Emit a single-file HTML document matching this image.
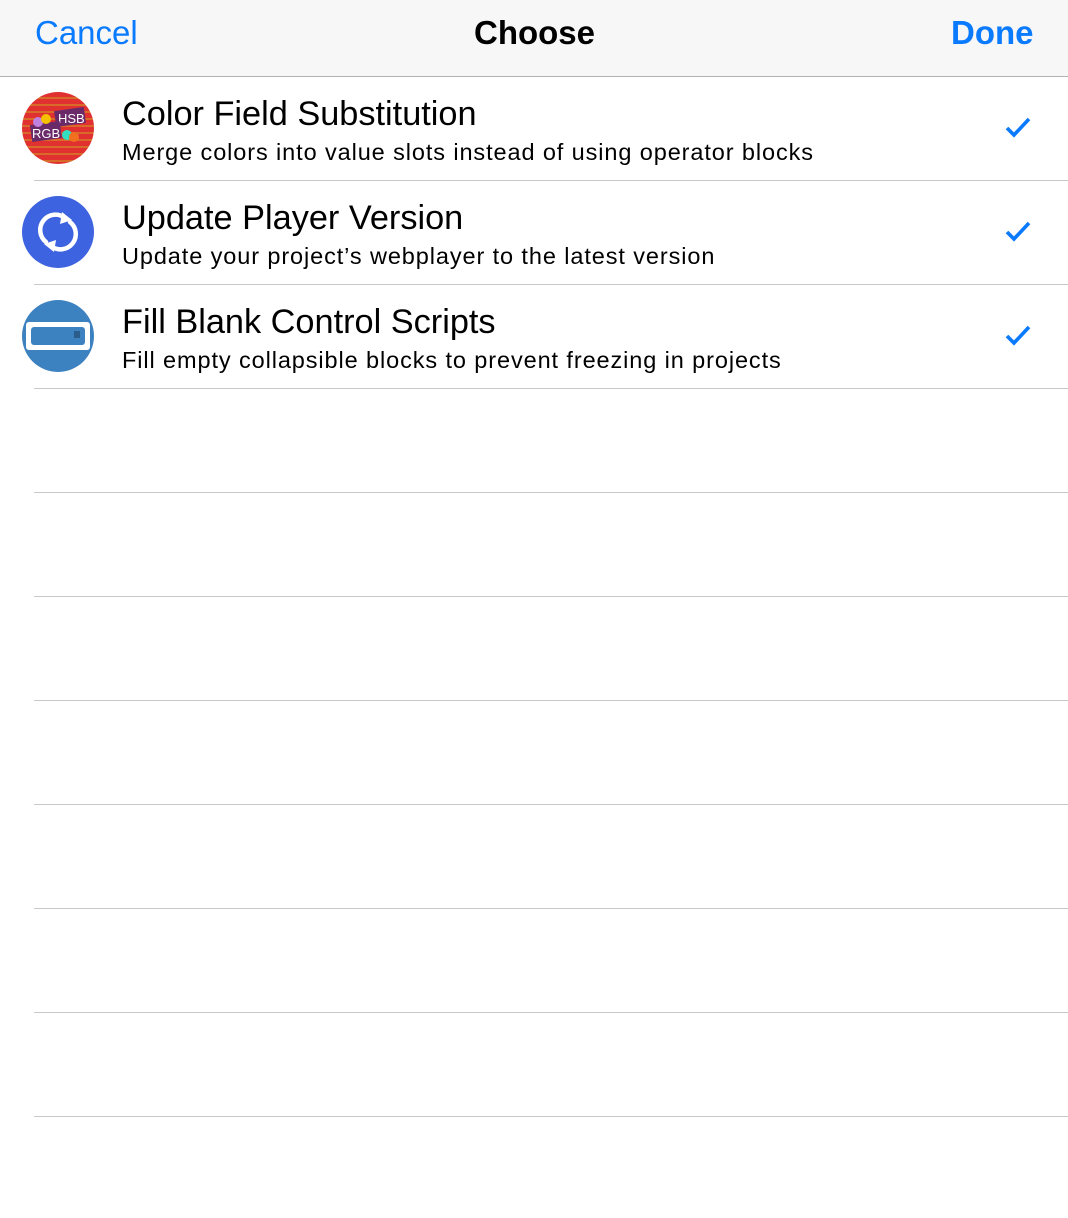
<!DOCTYPE html>
<html><head><style>
body{margin:0;width:1068px;height:1218px;background:#fff;font-family:"Liberation Sans",sans-serif;position:relative;overflow:hidden}
.hdr{position:absolute;left:0;top:0;width:1068px;height:77px;background:#f7f7f7;border-bottom:1px solid #b2b2b2;box-sizing:border-box}
.hdr span{position:absolute;top:14px;font-size:33px}
.sep{position:absolute;left:34px;right:0;height:1px;background:#c8c7cc}
.row{position:absolute;left:0;width:1068px;height:104px}
.ic{position:absolute;left:22px;top:15px;width:72px;height:72px;border-radius:50%;overflow:hidden}
.t{position:absolute;left:122px;top:18px;font-size:34.3px;color:#000}
.s{position:absolute;left:122px;top:62px;font-size:23.5px;color:#000;letter-spacing:0.9px}
.ck{position:absolute;left:1004px;top:38px}
</style></head><body>
<div class="hdr"><span style="left:35px;color:#0a7aff">Cancel</span><span style="left:474px;font-weight:bold;color:#000">Choose</span><span style="left:951px;font-weight:bold;color:#0a7aff">Done</span></div>

<div class="row" style="top:77px">
<div class="ic" style="background:repeating-linear-gradient(#e03030 0 5px,#d86a2a 5px 7px)">
<svg width="72" height="72"><rect x="33" y="17" width="30" height="16" fill="#6a2a6a" transform="rotate(-8 48 25)"/><text x="36" y="31" font-size="13" fill="#fff" font-family="Liberation Sans">HSB</text><rect x="9" y="31" width="30" height="17" fill="#6a2a6a" transform="rotate(-8 24 40)"/><text x="10" y="46" font-size="13" fill="#fff" font-family="Liberation Sans">RGB</text><circle cx="16" cy="30" r="5" fill="#c080e0"/><circle cx="24" cy="27" r="5" fill="#f5c000"/><circle cx="45" cy="43" r="5" fill="#30e0c0"/><circle cx="52" cy="45" r="5" fill="#f07020"/></svg></div>
<div class="t">Color Field Substitution</div><div class="s">Merge colors into value slots instead of using operator blocks</div>
<svg class="ck" width="28" height="24"><path d="M3 13 L10 20 L25 4" stroke="#0a7aff" stroke-width="3.6" fill="none"/></svg></div>
<div class="sep" style="top:180px"></div>

<div class="row" style="top:181px">
<div class="ic" style="background:#3e63e0"><svg width="72" height="72"><path d="M24 46 A15 15 0 0 1 43 22" stroke="#fff" stroke-width="4.5" fill="none" stroke-linecap="round"/><path d="M40 16 L50 24 L38 28 Z" fill="#fff"/><path d="M48 26 A15 15 0 0 1 29 50" stroke="#fff" stroke-width="4.5" fill="none" stroke-linecap="round"/><path d="M32 56 L22 48 L34 44 Z" fill="#fff"/></svg></div>
<div class="t">Update Player Version</div><div class="s">Update your project’s webplayer to the latest version</div>
<svg class="ck" width="28" height="24"><path d="M3 13 L10 20 L25 4" stroke="#0a7aff" stroke-width="3.6" fill="none"/></svg></div>
<div class="sep" style="top:284px"></div>

<div class="row" style="top:285px">
<div class="ic" style="background:#3d82c0"><svg width="72" height="72"><rect x="4" y="22" width="64" height="28" rx="3" fill="#fff"/><rect x="9" y="27" width="54" height="18" rx="3" fill="#3d82c0"/><rect x="52" y="31" width="6" height="7" fill="#2a5d8c"/></svg></div>
<div class="t">Fill Blank Control Scripts</div><div class="s">Fill empty collapsible blocks to prevent freezing in projects</div>
<svg class="ck" width="28" height="24"><path d="M3 13 L10 20 L25 4" stroke="#0a7aff" stroke-width="3.6" fill="none"/></svg></div>
<div class="sep" style="top:388px"></div>
<div class="sep" style="top:492px"></div>
<div class="sep" style="top:596px"></div>
<div class="sep" style="top:700px"></div>
<div class="sep" style="top:804px"></div>
<div class="sep" style="top:908px"></div>
<div class="sep" style="top:1012px"></div>
<div class="sep" style="top:1116px"></div>
</body></html>
